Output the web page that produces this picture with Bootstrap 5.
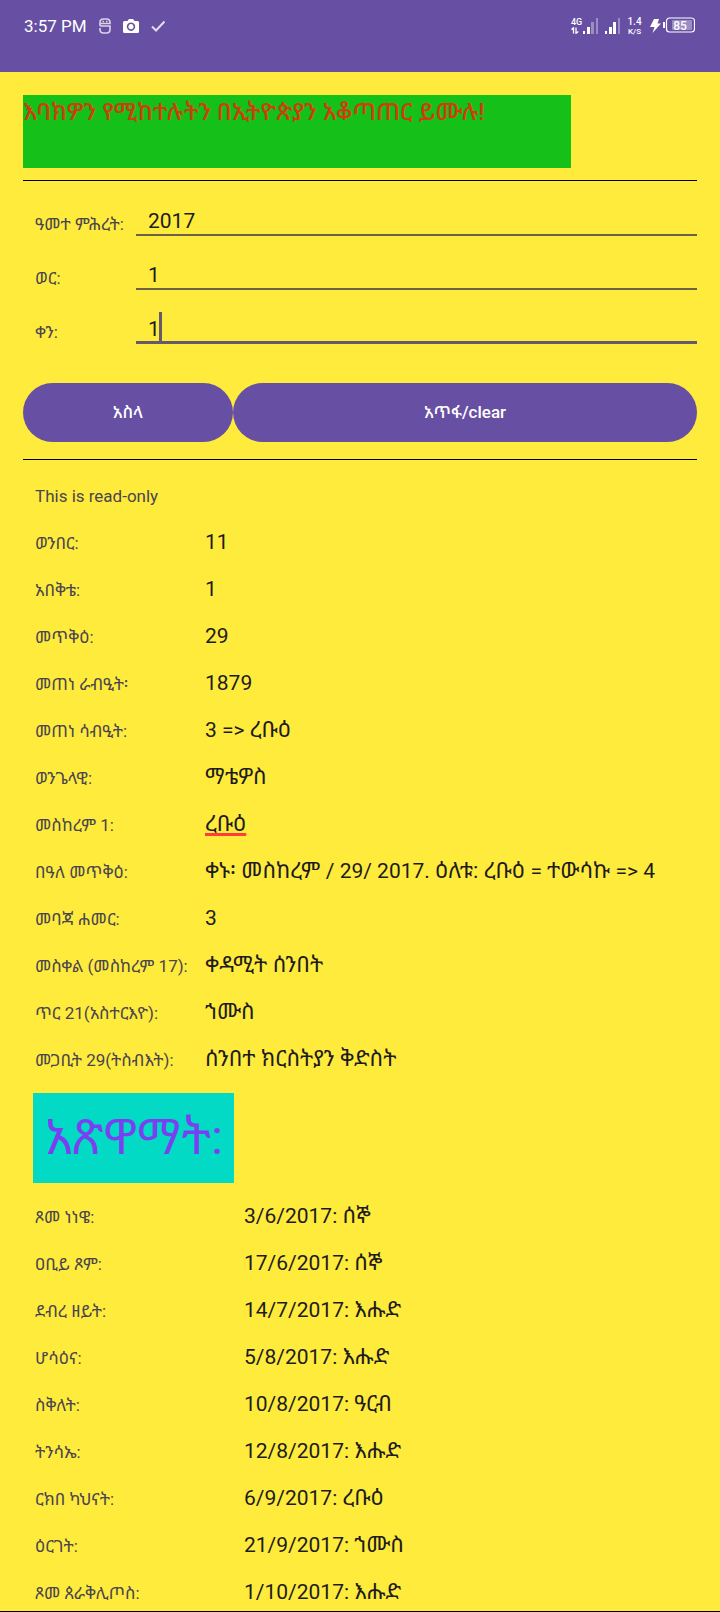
<!DOCTYPE html>
<html lang="am">
<head>
<meta charset="utf-8">
<meta name="viewport" content="width=device-width, initial-scale=1">
<title>ባሕረ ሐሳብ</title>
<link href="https://cdn.jsdelivr.net/npm/bootstrap@5.3.0/dist/css/bootstrap.min.css" rel="stylesheet">
<style>
  body { background: #ffeb3b; color: #1d1b20; font-family: Roboto, "Noto Sans Ethiopic", "Noto Sans", sans-serif; font-size: 22px; border-bottom: 1px solid #000; }
  .statusbar { background: #6750a3; color: #fff; height: 72px; padding: 14px 25px 0 24px; flex: none; }
  .statusbar > div { height: 24px; }
  .status-left { gap: 12px; }
  .status-right { gap: 7px; }
  .clock { font-size: 17px; line-height: 24px; }
  .tiny { font-size: 9px; line-height: 9px; font-weight: 500; width: 12px; }
  .speed { width: 15px; font-size: 10px; white-space: nowrap; }
  .speed small { font-size: 8px; }
  .screen { padding: 23px 23px 0; overflow-y: auto; scrollbar-width: none; }
  .notice { width: 548px; max-width: 100%; min-height: 73px; background: #15c119; color: #d23c0c; font-size: 24px; line-height: 34px; font-weight: 500; }
  .rule { border: 0; border-top: 1px solid #000; opacity: 1; margin: 12px 0 0; }
  .rule.lower { margin: 17px 0 24px; }
  .caption-text, .entry label, .results th { font-size: 17px; line-height: 24px; font-weight: 400; color: #49454f; }
  .caption-text { padding-left: 12px; margin-bottom: 10px; }
  .entries { padding-top: 1px; }
  .entry { height: 54px; }
  .entry label { width: 113px; flex: none; padding-left: 12px; white-space: nowrap; }
  .entry .form-control { background: transparent; border: 0; border-bottom: 2px solid #6b6247; border-radius: 0; padding: 6px 12px 0; height: 34px; line-height: 26px; font-size: 21px; color: #1d1b20; box-shadow: none; }
  .entry .form-control.active { border-bottom: 3px solid #655a6c; }
  .caret { position: absolute; left: 23px; top: 2px; width: 3px; height: 30px; background: #655a6c; }
  .buttons { margin-top: 39px; }
  .pill { height: 59px; border: 0; border-radius: 30px; background: #6750a3; color: #fff; font-size: 17px; font-weight: 500; }
  .pill:hover { background: #5a4593; color: #fff; }
  .pill.calc { width: 210px; }
  .results { width: 100%; table-layout: fixed; }
  .results th { width: 182px; padding: 0 0 0 12px; vertical-align: baseline; white-space: nowrap; }
  .results td { padding: 0; line-height: 47px; vertical-align: baseline; white-space: nowrap; }
  .results.fasts th { width: 221px; }
  .results time, .results .num { font-size: 21px; line-height: 24px; }
  .misspelt { text-decoration: underline 3px #ff3d3d; text-underline-offset: 2px; text-decoration-skip-ink: none; }
  .section-title { background: #03dac5; color: #7a3ff0; font-size: 49px; line-height: 90px; font-weight: 400; margin: 11px 0 9px 10px; padding: 0 12px; width: 201px; white-space: nowrap; }
</style>
</head>
<body class="vh-100 d-flex flex-column">
<header class="statusbar d-flex justify-content-between">
  <div class="status-left d-flex align-items-center">
    <span class="clock">3:57 PM</span>
    <svg width="12" height="16" viewBox="0 0 12 16" fill="none" stroke="#fff" stroke-opacity=".75" stroke-width="1.6"><path d="M1 8V4.500Q1 1 4.500 1h3Q11 1 11 4.500V5.500H1M1 8h10v3.500Q11 15 7.500 15h-3Q1 15 1 11.500V10"/><path d="M3.500 3.500h1.500M7 3.500h1.500"/></svg>
    <svg width="16" height="18" viewBox="4.5 0 16 18"><path fill="#fff" fill-rule="evenodd" d="M6 4h3l1.500-2h4L16 4h3q1.500 0 1.500 1.500v9q0 1.500-1.500 1.500H6q-1.500 0-1.500-1.500v-9Q4.500 4 6 4zm6.500 1.500a4.200 4.200 0 1 0 .01 0zm0 1.600a2.600 2.600 0 1 1-.01 0z"/></svg>
    <svg width="14" height="14" viewBox="1 0 14 14" fill="none" stroke="#fff" stroke-opacity=".8" stroke-width="2"><path d="M2 7.500l4 4L14.500 2.500"/></svg>
  </div>
  <div class="status-right d-flex align-items-center">
    <div class="d-flex align-items-center">
      <div class="tiny">4G<svg class="d-block" width="8" height="7" viewBox="0 0 8 7" fill="none" stroke="#fff" stroke-width="1.300"><path d="M.5 2.500L2.500.7V6.500M5 .5v5.800L7.300 4.500"/></svg></div>
      <svg width="15" height="16" viewBox="0 0 15 16" fill="#fff"><path d="M0 13h2v3H0zM4 9h3v7H4z"/><path opacity=".35" d="M8 4h3v12H8zM13 0h2v16h-2z"/></svg>
    </div>
    <svg width="15" height="16" viewBox="0 0 15 16" fill="#fff"><path d="M0 13h2v3H0zM4 9h3v7H4zM8 4h3v12H8z"/><path opacity=".35" d="M13 0h2v16h-2z"/></svg>
    <div class="tiny speed text-center">1.4<br><small>K/S</small></div>
    <svg width="46" height="18" viewBox="0 0 46 18"><path fill="#fff" d="M5 2h5L8.500 6.500H12L3.500 16 5.500 10H1z"/><path d="M15 5v6" stroke="#fff" stroke-width="2"/><rect x="17.500" y="1" width="28" height="14" rx="3" fill="none" stroke="#fff" stroke-width="1.200"/><rect x="23" y="3" width="20" height="10" rx="1" fill="#fff" opacity=".35"/><text x="31" y="12.500" text-anchor="middle" font-size="12" font-weight="500" fill="#fff">85</text></svg>
  </div>
</header>

<main class="screen flex-fill">
  <div class="notice">እባክዎን የሚከተሉትን በኢትዮጵያን አቆጣጠር ይሙሉ!</div>
  <hr class="rule">

  <form onsubmit="return false">
    <div class="entries">
      <div class="entry d-flex align-items-end"><label for="year">ዓመተ ምሕረት:</label><input class="form-control flex-fill" id="year" value="2017"></div>
      <div class="entry d-flex align-items-end"><label for="month">ወር:</label><input class="form-control flex-fill" id="month" value="1"></div>
      <div class="entry d-flex align-items-end"><label for="day">ቀን:</label><div class="position-relative flex-fill"><input class="form-control active" id="day" value="1"><span class="caret"></span></div></div>
    </div>
    <div class="buttons d-flex">
      <button class="btn pill calc" type="button">አስላ</button>
      <button class="btn pill flex-fill" type="reset">አጥፋ/clear</button>
    </div>
  </form>
  <hr class="rule lower">

  <p class="caption-text">This is read-only</p>
  <table class="results">
    <tbody>
      <tr><th scope="row">ወንበር:</th><td><span class="num">11</span></td></tr>
      <tr><th scope="row">አበቅቴ:</th><td><span class="num">1</span></td></tr>
      <tr><th scope="row">መጥቅዕ:</th><td><span class="num">29</span></td></tr>
      <tr><th scope="row">መጠነ ራብዒት፡</th><td><span class="num">1879</span></td></tr>
      <tr><th scope="row">መጠነ ሳብዒት:</th><td><span class="num">3 =&gt; </span>ረቡዕ</td></tr>
      <tr><th scope="row">ወንጌላዊ:</th><td>ማቴዎስ</td></tr>
      <tr><th scope="row">መስከረም 1:</th><td><span class="misspelt">ረቡዕ</span></td></tr>
      <tr><th scope="row">በዓለ መጥቅዕ:</th><td>ቀኑ፡ መስከረም <span class="num">/ 29/ 2017. </span>ዕለቱ: ረቡዕ <span class="num">= </span>ተውሳኩ <span class="num">=&gt; 4</span></td></tr>
      <tr><th scope="row">መባጃ ሐመር:</th><td><span class="num">3</span></td></tr>
      <tr><th scope="row">መስቀል (መስከረም 17):</th><td>ቀዳሚት ሰንበት</td></tr>
      <tr><th scope="row">ጥር 21(አስተርእዮ):</th><td>ኀሙስ</td></tr>
      <tr><th scope="row">መጋቢት 29(ትስብእት):</th><td>ሰንበተ ክርስትያን ቅድስት</td></tr>
    </tbody>
  </table>

  <h2 class="section-title">አጽዋማት:</h2>

  <table class="results fasts">
    <tbody>
      <tr><th scope="row">ጾመ ነነዌ:</th><td><time>3/6/2017: </time>ሰኞ</td></tr>
      <tr><th scope="row">ዐቢይ ጾም:</th><td><time>17/6/2017: </time>ሰኞ</td></tr>
      <tr><th scope="row">ደብረ ዘይት:</th><td><time>14/7/2017: </time>እሑድ</td></tr>
      <tr><th scope="row">ሆሳዕና:</th><td><time>5/8/2017: </time>እሑድ</td></tr>
      <tr><th scope="row">ስቅለት:</th><td><time>10/8/2017: </time>ዓርብ</td></tr>
      <tr><th scope="row">ትንሳኤ:</th><td><time>12/8/2017: </time>እሑድ</td></tr>
      <tr><th scope="row">ርክበ ካህናት:</th><td><time>6/9/2017: </time>ረቡዕ</td></tr>
      <tr><th scope="row">ዕርገት:</th><td><time>21/9/2017: </time>ኀሙስ</td></tr>
      <tr><th scope="row">ጾመ ጰራቅሊጦስ:</th><td><time>1/10/2017: </time>እሑድ</td></tr>
    </tbody>
  </table>
</main>
<script src="https://cdn.jsdelivr.net/npm/bootstrap@5.3.0/dist/js/bootstrap.bundle.min.js"></script>
</body>
</html>
